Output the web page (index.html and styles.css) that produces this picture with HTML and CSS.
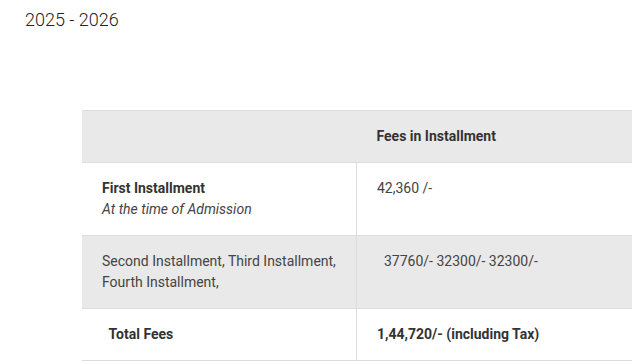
FILE: index.html
```html
<!DOCTYPE html>
<html>
<head>
<meta charset="utf-8">
<link rel="stylesheet" href="styles.css">
</head>
<body>
<h2 class="year">2025 - 2026</h2>
<div class="wrap">
<table class="fees">
  <thead>
    <tr><th class="blank"></th><th>Fees in Installment</th></tr>
  </thead>
  <tbody>
    <tr>
      <td><strong>First Installment</strong><br><em>At the time of Admission</em></td>
      <td>42,360 /-</td>
    </tr>
    <tr class="alt">
      <td>Second Installment, Third Installment, Fourth Installment,</td>
      <td>&nbsp; 37760/- 32300/- 32300/-</td>
    </tr>
    <tr>
      <td><strong>&nbsp; Total Fees</strong></td>
      <td><strong>1,44,720/- (including Tax)</strong></td>
    </tr>
  </tbody>
</table>
</div>
</body>
</html>
```
FILE: styles.css
```css
html, body {
  margin: 0;
  padding: 0;
  background: #fff;
}
body {
  font-family: Roboto, "Liberation Sans", sans-serif;
  color: #444;
}
.year {
  margin: 0;
  padding: 9px 0 0 25px;
  font-size: 18px;
  font-weight: 300;
  line-height: 22px;
  color: #222;
}
.wrap {
  padding: 79px 0 0 82px;
}
.fees {
  width: 550px;
  border-collapse: collapse;
  font-size: 14px;
  line-height: 21px;
}
.fees th, .fees td {
  padding: 15px 20px;
  text-align: left;
  vertical-align: top;
  border-top: 1px solid #dcdcdc;
  border-bottom: 1px solid #dcdcdc;
}
.fees td:first-child, .fees th:first-child {
  width: 234px;
  border-right: 1px solid #dcdcdc;
}
.fees th {
  background: #e9e9e9;
  font-weight: 700;
  color: #333;
}
.fees th:first-child {
  border-right: none;
}
.fees tr.alt td {
  background: #e9e9e9;
}
.fees strong {
  color: #333;
}
.fees em {
  color: #444;
}
```
